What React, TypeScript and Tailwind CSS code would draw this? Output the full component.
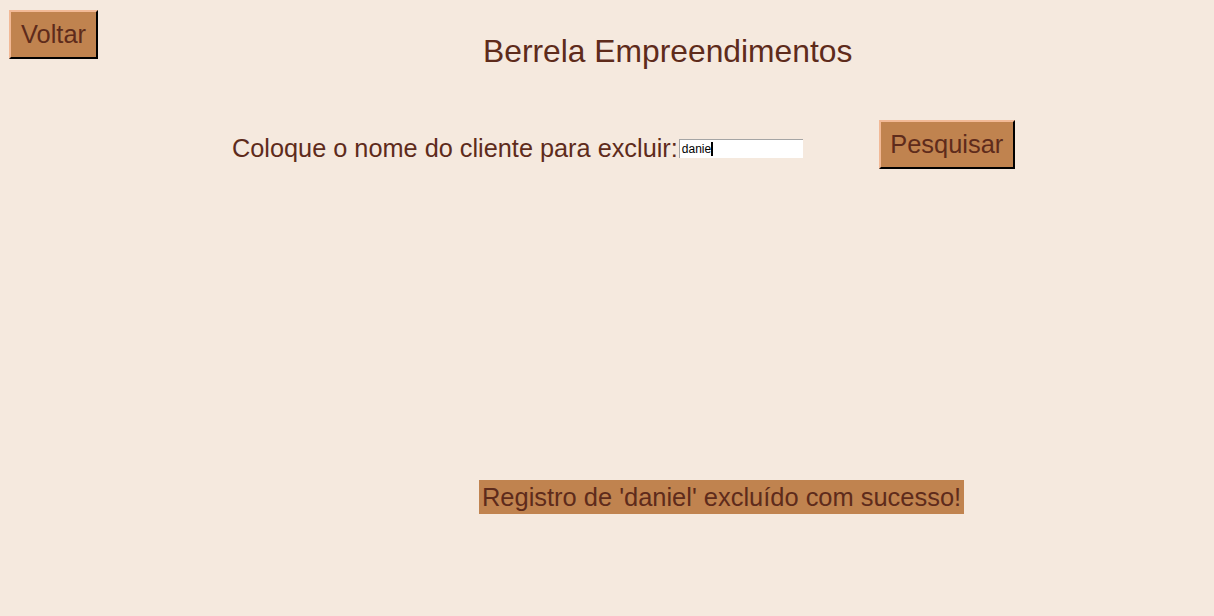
export default function App() {
  const btn =
    "bg-[#c0834f] text-[#5e2b1b] text-[25.4px] leading-[27px] border-2 border-t-[#f2b996] border-l-[#f2b996] border-r-black border-b-black";

  return (
    <div className="min-h-screen w-full bg-[#f5e9de] font-['Liberation_Sans',Arial,sans-serif] text-[#5e2b1b]">
      {/* header */}
      <div className="flex items-start h-[67px]">
        <button className={`${btn} ml-[9px] mt-[10px] w-[89px] h-[49px]`}>
          Voltar
        </button>
        <h1 className="ml-[385px] mt-[34px] text-[31.8px] leading-[34px] font-normal">
          Berrela Empreendimentos
        </h1>
      </div>

      {/* search row */}
      <div className="flex items-start pl-[232px] mt-[53px] h-[49px]">
        <label className="mt-[14px] text-[25.3px] leading-[28px]">
          Coloque o nome do cliente para excluir:
        </label>
        <div className="ml-[1px] mt-[19px] w-[124px] h-[19px] bg-white border-t border-l border-[#a5a5a5] flex items-center pl-[2px] text-[12px] text-black">
          <span>danie</span>
          <span className="inline-block w-[2px] h-[14px] bg-black" />
        </div>
        <button className={`${btn} ml-[76px] w-[136px] h-[49px]`}>
          Pesquisar
        </button>
      </div>

      {/* result */}
      <div className="pl-[479px] mt-[311px] flex">
        <div className="bg-[#c0834f] px-[3px] h-[34px] text-[25.45px] leading-[34px]">
          Registro de 'daniel' excluído com sucesso!
        </div>
      </div>
    </div>
  );
}
